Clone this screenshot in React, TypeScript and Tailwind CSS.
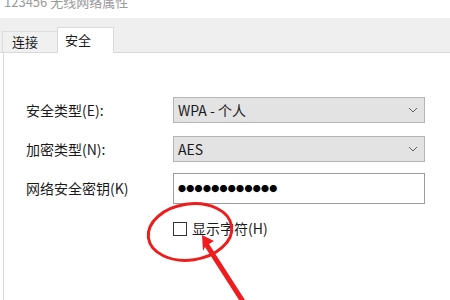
import React from "react";

const font = { fontFamily: '"Noto Sans CJK SC", "Noto Sans", sans-serif' };

function Chevron() {
  return (
    <svg width="10" height="6" viewBox="0 0 10 6" className="shrink-0">
      <path d="M1 1 L5 5 L9 1" fill="none" stroke="#606060" strokeWidth="1" />
    </svg>
  );
}

export default function App() {
  return (
    <div
      className="w-[450px] h-[300px] bg-white relative overflow-hidden flex flex-col text-[#1a1a1a]"
      style={font}
    >
      {/* title */}
      <div className="h-[18px] overflow-hidden pl-[4px] shrink-0">
        <div className="text-[13px] leading-[16px] text-[#9a9a9a] -mt-[6px]">123456 无线网络属性</div>
      </div>
      {/* tab bar */}
      <div className="h-[35px] shrink-0 bg-[#efefef] border-b border-[#d9d9d9] flex items-end pl-[2px]">
        <div className="h-[21px] w-[55px] border-t border-l border-[#dcdcdc] bg-[#f0f0f0] text-[13px] leading-[20px] pl-[9px]">
          连接
        </div>
        <div className="h-[26px] w-[57px] -mb-px bg-white border-t border-l border-r border-[#d9d9d9] text-[13px] leading-[24px] pl-[7px]">
          安全
        </div>
      </div>
      {/* content */}
      <div className="flex-1 ml-[3px] border-l border-[#dadada] flex flex-col pt-[44px]">
        <div className="flex items-center h-[26px]">
          <div className="w-[169px] pl-[22px] text-[14px]">安全类型(E):</div>
          <div className="w-[252px] h-[26px] bg-[#e3e3e3] border border-[#b4b4b4] flex items-center justify-between pl-[4px] pr-[6px]">
            <span className="text-[14px]">WPA - 个人</span>
            <Chevron />
          </div>
        </div>
        <div className="flex items-center h-[26px] mt-[13px]">
          <div className="w-[169px] pl-[22px] text-[14px]">加密类型(N):</div>
          <div className="w-[252px] h-[26px] bg-[#e3e3e3] border border-[#b4b4b4] flex items-center justify-between pl-[4px] pr-[6px]">
            <span className="text-[14px]">AES</span>
            <Chevron />
          </div>
        </div>
        <div className="flex items-center h-[31px] mt-[11px]">
          <div className="w-[169px] pl-[22px] text-[14px]">网络安全密钥(K)</div>
          <div className="w-[252px] h-[31px] bg-white border border-[#9c9c9c] flex items-center pl-[4px]">
            <span className="text-[8px] tracking-[0.3px] text-black">●●●●●●●●●●●●</span>
          </div>
        </div>
        <div className="flex items-center mt-[14px] pl-[169px]">
          <div className="w-[14px] h-[14px] border border-[#333] bg-white shrink-0" />
          <span className="text-[14px] ml-[5px]">显示字符(H)</span>
        </div>
      </div>
      {/* red annotation */}
      <svg className="absolute left-0 top-0 pointer-events-none" width="450" height="300" viewBox="0 0 450 300">
        <ellipse cx="190" cy="232" rx="42" ry="28" fill="none" stroke="#ee1c1c" strokeWidth="3" transform="rotate(-8 190 232)" />
        <path d="M202 235 L214 241 L209 244 L245 300 L239 300 L205 247 L203 251 Z" fill="#ee1c1c" />
      </svg>
    </div>
  );
}
